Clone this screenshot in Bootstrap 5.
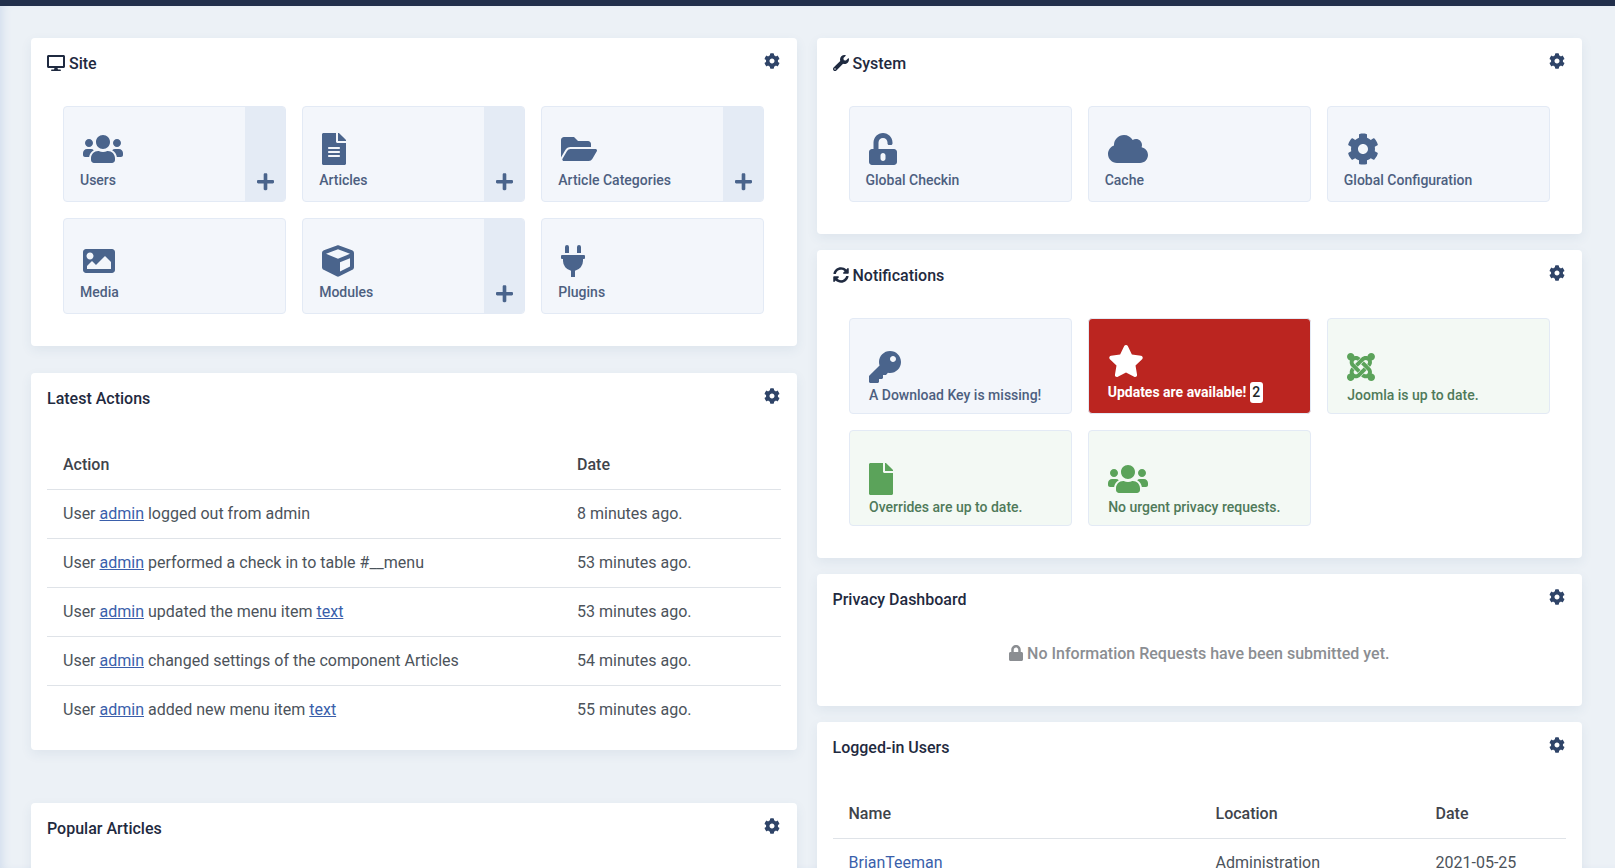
<!DOCTYPE html>
<html lang="en">
<head>
    <meta charset="UTF-8">
    <meta name="viewport" content="width=device-width, initial-scale=1.0">
    <title>Home Dashboard</title>
    <link rel="stylesheet" href="https://cdn.jsdelivr.net/npm/bootstrap@5.3.3/dist/css/bootstrap.min.css">
    <script src="https://cdn.jsdelivr.net/npm/bootstrap@5.3.3/dist/js/bootstrap.bundle.min.js"></script>
    <style>
        html, body {
            height: 100vh;
            overflow: hidden;
        }
        body {
            font-family: Roboto, "Liberation Sans", sans-serif;
            background-color: #ecf1f6;
            color: #495057;
        }
        .top-strip {
            height: 6px;
            background-color: #212f4b;
        }
        .dash-main {
            padding: 32px 33px 0 31px;
            box-shadow: inset 7px 0 8px -4px #d3deed;
            height: calc(100vh - 6px);
        }
        .dash-cols {
            --bs-gutter-x: 20px;
        }
        .dash-card {
            border: 0;
            border-radius: 4px;
            box-shadow: 0 4px 12px rgba(52, 84, 130, 0.08);
        }
        .gap-site { margin-bottom: 27px; }
        .gap-actions { margin-bottom: 53px; }
        .gap-right { margin-bottom: 16px; }
        .card-top {
            padding: 14px 17px 0 16px;
        }
        .card-heading {
            font-size: 16px;
            font-weight: 500;
            line-height: 24px;
            color: #1f2a40;
            margin: 0;
        }
        .head-icon {
            width: 18px;
            height: 16px;
            vertical-align: -2px;
            fill: #1f2a40;
        }
        .head-icon.sq { width: 16px; }
        .gear-icon {
            width: 16px;
            height: 16px;
            margin-top: 1px;
            fill: #2f4468;
        }
        .tile-wrap {
            padding: 30px 32px 32px;
        }
        .tile-row {
            --bs-gutter-x: 16px;
            --bs-gutter-y: 16px;
        }
        .dash-tile {
            height: 96px;
            background-color: #f3f6fb;
            border: 1px solid #e3eaf5;
            border-radius: 4px;
            overflow: hidden;
            color: #4d5f80;
        }
        .tile-main {
            padding: 0 0 10px 16px;
            flex: 1 1 auto;
            justify-content: flex-end;
        }
        .tile-glyph {
            height: 32px;
            width: auto;
            margin: 0 0 5px 3px;
            fill: #4a648c;
            align-self: flex-start;
        }
        .tile-label {
            font-size: 14px;
            font-weight: 500;
            line-height: 21px;
        }
        .tile-side {
            width: 40px;
            flex: 0 0 40px;
            background-color: #e4ebf5;
            padding-bottom: 10px;
        }
        .plus-glyph {
            width: 17px;
            height: 19.5px;
            fill: #4a648c;
        }
        .tile-note .tile-main {
            padding: 0 0 7.5px 19.5px;
        }
        .tile-note .tile-glyph {
            margin: 0 0 1.5px 0;
        }
        .tile-ok {
            background-color: #f3f9f4;
            color: #4f7a5a;
        }
        .tile-ok .tile-glyph {
            fill: #5ba35a;
        }
        .tile-alert {
            background-color: #bb2520;
            color: #fff;
        }
        .tile-alert .tile-main {
            padding: 0 0 10px 19px;
        }
        .tile-alert .tile-glyph {
            fill: #fff;
            margin: 0 0 5px 0;
        }
        .tile-alert .tile-label {
            font-weight: 700;
        }
        .count-pill {
            display: inline-block;
            background-color: #fff;
            color: #212529;
            border-radius: 3px;
            padding: 0 2.5px;
            font-weight: 500;
        }
        .table-wrap {
            padding: 30px 16px 16px;
        }
        .dash-table {
            --bs-table-bg: transparent;
            --bs-table-color: #4c535b;
            --bs-table-border-color: #dfe3e8;
            table-layout: fixed;
        }
        .dash-table th, .dash-table td {
            padding: 12px 16px;
            line-height: 24px;
        }
        .dash-table th {
            font-weight: 500;
            color: #3f444b;
        }
        .dash-table thead tr { border-bottom: 1px solid #dfe3e8; }
        .dash-table thead th { border-bottom: 0; }
        .dash-table tbody { border-top: 0 !important; }
        .dash-table tbody tr:last-child td { border-bottom: 0; }
        .dash-table a {
            color: #3a5fab;
        }
        .col-action { width: 514px; }
        .col-name { width: 367px; }
        .col-where { width: 220px; }
        .empty-note {
            padding: 30px 16px 40px;
            font-weight: 500;
            line-height: 24px;
            color: #8b8e92;
        }
        .empty-note svg {
            width: 14px;
            height: 16px;
            fill: #8b8e92;
            vertical-align: -2px;
        }
        .popular-card {
            min-height: 200px;
        }
    </style>
</head>
<body>
    <svg xmlns="http://www.w3.org/2000/svg" class="d-none">
        <symbol id="i-users" viewBox="0 0 640 512"><path d="M96 224c35.3 0 64-28.7 64-64s-28.7-64-64-64-64 28.7-64 64 28.7 64 64 64zm448 0c35.3 0 64-28.7 64-64s-28.7-64-64-64-64 28.7-64 64 28.7 64 64 64zm32 32h-64c-17.6 0-33.5 7.1-45.1 18.6 40.3 22.1 68.9 62 75.1 109.4h66c17.7 0 32-14.3 32-32v-32c0-35.3-28.7-64-64-64zm-256 0c61.9 0 112-50.1 112-112S381.9 32 320 32 208 82.1 208 144s50.1 112 112 112zm76.8 32h-8.3c-20.8 10-43.9 16-68.5 16s-47.6-6-68.5-16h-8.3C179.6 288 128 339.6 128 403.2V432c0 26.5 21.5 48 48 48h288c26.5 0 48-21.5 48-48v-28.8c0-63.6-51.6-115.2-115.2-115.2zm-223.7-13.4C161.5 263.1 145.6 256 128 256H64c-35.3 0-64 28.7-64 64v32c0 17.7 14.3 32 32 32h65.9c6.3-47.4 34.9-87.3 75.2-109.4z"/></symbol>
        <symbol id="i-file-alt" viewBox="0 0 384 512"><path d="M224 136V0H24C10.7 0 0 10.7 0 24v464c0 13.3 10.7 24 24 24h336c13.3 0 24-10.7 24-24V160H248c-13.2 0-24-10.8-24-24zm64 236c0 6.6-5.4 12-12 12H108c-6.6 0-12-5.4-12-12v-8c0-6.6 5.4-12 12-12h168c6.6 0 12 5.4 12 12v8zm0-64c0 6.6-5.4 12-12 12H108c-6.6 0-12-5.4-12-12v-8c0-6.6 5.4-12 12-12h168c6.6 0 12 5.4 12 12v8zm0-72v8c0 6.6-5.4 12-12 12H108c-6.6 0-12-5.4-12-12v-8c0-6.6 5.4-12 12-12h168c6.6 0 12 5.4 12 12zm96-114.1v6.1H256V0h6.1c6.4 0 12.5 2.5 17 7l97.9 98c4.5 4.5 7 10.6 7 16.9z"/></symbol>
        <symbol id="i-file" viewBox="0 0 384 512"><path d="M224 136V0H24C10.7 0 0 10.7 0 24v464c0 13.3 10.7 24 24 24h336c13.3 0 24-10.7 24-24V160H248c-13.2 0-24-10.8-24-24zm160-14.1v6.1H256V0h6.1c6.4 0 12.5 2.5 17 7l97.9 98c4.5 4.5 7 10.6 7 16.9z"/></symbol>
        <symbol id="i-folder" viewBox="0 0 576 512"><path d="M572.694 292.093L500.27 416.248A63.997 63.997 0 0 1 444.989 448H45.025c-18.523 0-30.064-20.093-20.731-36.093l72.424-124.155A64 64 0 0 1 152 256h399.964c18.523 0 30.064 20.093 20.73 36.093zM152 224h328v-48c0-26.51-21.49-48-48-48H272l-64-64H48C21.49 64 0 85.49 0 112v278.046l69.077-118.418C86.214 242.25 117.989 224 152 224z"/></symbol>
        <symbol id="i-image" viewBox="0 0 512 512"><path d="M464 448H48c-26.51 0-48-21.49-48-48V112c0-26.51 21.49-48 48-48h416c26.51 0 48 21.49 48 48v288c0 26.51-21.49 48-48 48zM112 120c-30.928 0-56 25.072-56 56s25.072 56 56 56 56-25.072 56-56-25.072-56-56-56zM64 384h384V272l-87.515-87.515c-4.686-4.686-12.284-4.686-16.971 0L208 320l-55.515-55.515c-4.686-4.686-12.284-4.686-16.971 0L64 336v48z"/></symbol>
        <symbol id="i-cube" viewBox="0 0 512 512"><path d="M239.1 6.3l-208 78c-18.7 7-31.1 25-31.1 45v225.1c0 18.2 10.3 34.8 26.5 42.9l208 104c13.5 6.8 29.4 6.8 42.9 0l208-104c16.3-8.1 26.5-24.8 26.5-42.9V129.3c0-20-12.4-37.9-31.1-44.9l-208-78C262 2.2 250 2.2 239.1 6.3zM256 68.4l192 72v1.1l-192 78-192-78v-1.1l192-72zm32 356V275.5l160-65v133.9l-160 80z"/></symbol>
        <symbol id="i-plug" viewBox="0 0 384 512"><path d="M320,32a32,32,0,0,0-64,0v96h64Zm48,128H16A16,16,0,0,0,0,176v32a16,16,0,0,0,16,16H32v32A160.07,160.07,0,0,0,160,412.8V512h64V412.8A160.07,160.07,0,0,0,352,256V224h16a16,16,0,0,0,16-16V176A16,16,0,0,0,368,160ZM128,32a32,32,0,0,0-64,0v96h64Z"/></symbol>
        <symbol id="i-plus" viewBox="0 0 448 512"><path d="M416 208H272V64c0-17.67-14.33-32-32-32h-32c-17.67 0-32 14.33-32 32v144H32c-17.67 0-32 14.33-32 32v32c0 17.67 14.33 32 32 32h144v144c0 17.67 14.33 32 32 32h32c17.67 0 32-14.33 32-32V304h144c17.67 0 32-14.33 32-32v-32c0-17.67-14.33-32-32-32z"/></symbol>
        <symbol id="i-cog" viewBox="0 0 512 512"><path d="M487.4 315.7l-42.6-24.6c4.3-23.2 4.3-47 0-70.2l42.6-24.6c4.9-2.8 7.1-8.6 5.5-14-11.1-35.6-30-67.8-54.7-94.6-3.8-4.1-10-5.1-14.8-2.3L380.8 110c-17.9-15.4-38.5-27.3-60.8-35.1V25.8c0-5.6-3.9-10.5-9.4-11.7-36.7-8.2-74.3-7.8-109.2 0-5.5 1.2-9.4 6.1-9.4 11.7V75c-22.2 7.9-42.8 19.8-60.8 35.1L88.7 85.5c-4.9-2.8-11-1.9-14.8 2.3-24.7 26.7-43.6 58.9-54.7 94.6-1.7 5.4.6 11.2 5.5 14L67.3 221c-4.3 23.2-4.3 47 0 70.2l-42.6 24.6c-4.9 2.8-7.1 8.6-5.5 14 11.1 35.6 30 67.8 54.7 94.6 3.8 4.1 10 5.1 14.8 2.3l42.6-24.6c17.9 15.4 38.5 27.3 60.8 35.1v49.2c0 5.6 3.9 10.5 9.4 11.7 36.7 8.2 74.3 7.8 109.2 0 5.5-1.2 9.4-6.1 9.4-11.7v-49.2c22.2-7.9 42.8-19.8 60.8-35.1l42.6 24.6c4.9 2.8 11 1.9 14.8-2.3 24.7-26.7 43.6-58.9 54.7-94.6 1.5-5.5-.7-11.3-5.6-14.1zM256 336c-44.1 0-80-35.9-80-80s35.9-80 80-80 80 35.9 80 80-35.9 80-80 80z"/></symbol>
        <symbol id="i-desktop" viewBox="0 0 576 512"><path d="M528 0H48C21.5 0 0 21.5 0 48v320c0 26.5 21.5 48 48 48h192l-16 48h-72c-13.3 0-24 10.7-24 24s10.7 24 24 24h272c13.3 0 24-10.7 24-24s-10.7-24-24-24h-72l-16-48h192c26.5 0 48-21.5 48-48V48c0-26.5-21.5-48-48-48zm-16 352H64V64h448v288z"/></symbol>
        <symbol id="i-wrench" viewBox="0 0 512 512"><path d="M507.73 109.1c-2.24-9.03-13.54-12.09-20.12-5.51l-74.36 74.36-67.88-11.31-11.31-67.88 74.36-74.36c6.62-6.62 3.43-17.9-5.66-20.16-47.38-11.74-99.55.91-136.58 37.93-39.64 39.64-50.55 97.1-34.05 147.2L18.74 402.76c-24.99 24.99-24.99 65.51 0 90.5 24.99 24.99 65.51 24.99 90.5 0l213.21-213.21c50.12 16.71 107.47 5.68 147.37-34.22 37.07-37.07 49.7-89.32 37.91-136.73zM64 472c-13.25 0-24-10.75-24-24 0-13.26 10.75-24 24-24s24 10.74 24 24c0 13.25-10.75 24-24 24z"/></symbol>
        <symbol id="i-sync" viewBox="0 0 512 512"><path d="M370.72 133.28C339.458 104.008 298.888 87.962 255.848 88c-77.458.068-144.328 53.178-162.791 126.85-1.344 5.363-6.122 9.15-11.651 9.15H24.103c-7.498 0-13.194-6.807-11.807-14.176C33.933 94.924 134.813 8 256 8c66.448 0 126.791 26.136 171.315 68.685L463.03 40.97C478.149 25.851 504 36.559 504 57.941V192c0 13.255-10.745 24-24 24H345.941c-21.382 0-32.09-25.851-16.971-40.971l41.75-41.749zM32 296h134.059c21.382 0 32.09 25.851 16.971 40.971l-41.75 41.75c31.262 29.273 71.835 45.319 114.876 45.28 77.418-.07 144.315-53.144 162.787-126.849 1.344-5.363 6.122-9.15 11.651-9.15h57.304c7.498 0 13.194 6.807 11.807 14.176C478.067 417.076 377.187 504 256 504c-66.448 0-126.791-26.136-171.315-68.685L48.97 471.03C33.851 486.149 8 475.441 8 454.059V320c0-13.255 10.745-24 24-24z"/></symbol>
        <symbol id="i-lock" viewBox="0 0 448 512"><path d="M400 224h-24v-72C376 68.2 307.8 0 224 0S72 68.2 72 152v72H48c-26.5 0-48 21.5-48 48v192c0 26.5 21.5 48 48 48h352c26.5 0 48-21.5 48-48V272c0-26.5-21.5-48-48-48zm-104 0H152v-72c0-39.7 32.3-72 72-72s72 32.3 72 72v72z"/></symbol>
        <symbol id="i-unlock" viewBox="0 0 448 512"><path d="M400 256H152V152.9c0-39.6 31.7-72.5 71.3-72.9 40-.4 72.7 32.1 72.7 72v16c0 13.3 10.7 24 24 24h32c13.3 0 24-10.7 24-24v-16C376 68 307.5-.3 223.5 0 139.5.3 72 69.5 72 153.5V256H48c-26.5 0-48 21.5-48 48v160c0 26.5 21.5 48 48 48h352c26.5 0 48-21.5 48-48V304c0-26.5-21.5-48-48-48zM264 408c0 22.1-17.9 40-40 40s-40-17.9-40-40v-48c0-22.1 17.9-40 40-40s40 17.9 40 40v48z"/></symbol>
        <symbol id="i-cloud" viewBox="0 0 640 512"><path d="M537.6 226.6c4.1-10.7 6.4-22.4 6.4-34.6 0-53-43-96-96-96-19.7 0-38.1 6-53.3 16.2C367 64.2 315.3 32 256 32c-88.4 0-160 71.6-160 160 0 2.7.1 5.4.2 8.1C40.2 219.8 0 273.2 0 336c0 79.5 64.5 144 144 144h368c70.7 0 128-57.3 128-128 0-61.9-44-113.6-102.4-125.4z"/></symbol>
        <symbol id="i-key" viewBox="0 0 512 512"><path d="M512 176.001C512 273.203 433.202 352 336 352c-11.22 0-22.19-1.062-32.827-3.069l-24.012 27.014A23.999 23.999 0 0 1 261.223 384H224v40c0 13.255-10.745 24-24 24h-40v40c0 13.255-10.745 24-24 24H24c-13.255 0-24-10.745-24-24v-78.059c0-6.365 2.529-12.47 7.029-16.971l161.802-161.802C163.108 213.814 160 195.271 160 176 160 78.798 238.797.001 335.999 0 433.488-.001 512 78.511 512 176.001zM336 128c0 26.51 21.49 48 48 48s48-21.49 48-48-21.49-48-48-48-48 21.49-48 48z"/></symbol>
        <symbol id="i-star" viewBox="0 0 576 512"><path d="M259.3 17.8L194 150.2 47.9 171.5c-26.2 3.8-36.7 36.1-17.7 54.6l105.7 103-25 145.5c-4.5 26.3 23.2 46 46.4 33.7L288 439.6l130.7 68.7c23.2 12.2 50.9-7.4 46.4-33.7l-25-145.5 105.7-103c19-18.5 8.5-50.8-17.7-54.6L382 150.2 316.7 17.8c-11.7-23.6-45.6-23.9-57.4 0z"/></symbol>
        <symbol id="i-joomla" viewBox="0 0 448 512"><path d="M.6 92.1C.6 58.8 27.4 32 60.4 32c30 0 54.5 21.9 59.2 50.2 32.6-7.6 67.1.6 96.5 30l-44.3 44.3c-20.5-20.5-42.6-16.3-55.4-3.5-14.3 14.3-14.3 37.9 0 52.2l99.5 99.5-44 44.3c-87.7-87.2-49.7-49.7-99.8-99.7-26.8-26.5-35-64.8-24.8-98.9C20.4 144.6.6 120.7.6 92.1zm129.5 116.4l44.3 44.3c10-10 89.7-89.7 99.7-99.8 14.3-14.3 37.6-14.3 51.9 0 12.8 12.8 17 35-3.5 55.4l44 44.3c31.2-31.2 38.5-67.6 28.9-101.2 29.2-4.1 51.9-29.2 51.9-59.5 0-33.2-26.8-60.1-59.8-60.1-30.3 0-55.4 22.5-59.5 51.6-33.8-9.9-71.7-1.5-98.3 25.1-18.7 18.6-71.6 71.7-99.6 99.9zm266.3 152.2c8.2-32.7-.9-68.5-26.3-93.9-11.8-12.2 5 4.7-99.5-99.7l-44.3 44.3 99.7 99.7c14.3 14.3 14.3 37.6 0 51.9-12.8 12.8-35 17-55.4-3.5l-44 44.3c27.6 30.2 68 38.8 102.7 28 5.5 27.4 29.7 48.1 58.9 48.1 33 0 59.8-26.8 59.8-60.1 0-30.2-22.5-55-51.6-58.9zm-84.3-53.1l-44-44.3c-87 86.4-50.4 50.4-99.7 99.8-14.3 14.3-37.6 14.3-51.9 0-13.1-13.4-16.9-35.3 3.2-55.4l-44-44.3c-30.2 30.2-38 65.2-29.5 98.3-26.7 6-46.8 29.9-46.8 58.4 0 33.2 26.8 60.1 59.8 60.1 28.6 0 52.5-19.8 58.6-46.7 32.7 8.2 68.5-.6 94.2-26 32.1-32 12.2-12.4 99.5-99.7z"/></symbol>
    </svg>

    <div class="top-strip"></div>

    <main class="dash-main">
        <div class="row dash-cols">

            <div class="col-6">
                <section class="card dash-card gap-site">
                    <div class="card-top d-flex justify-content-between align-items-start">
                        <h2 class="card-heading"><svg class="head-icon"><use href="#i-desktop"/></svg> Site</h2>
                        <svg class="gear-icon"><use href="#i-cog"/></svg>
                    </div>
                    <div class="tile-wrap">
                        <div class="row row-cols-3 tile-row">
                            <div class="col"><div class="dash-tile d-flex">
                                <div class="tile-main d-flex flex-column"><svg class="tile-glyph" viewBox="0 0 640 512"><use href="#i-users"/></svg><span class="tile-label">Users</span></div>
                                <div class="tile-side d-flex align-items-end justify-content-center"><svg class="plus-glyph"><use href="#i-plus"/></svg></div>
                            </div></div>
                            <div class="col"><div class="dash-tile d-flex">
                                <div class="tile-main d-flex flex-column"><svg class="tile-glyph" viewBox="0 0 384 512"><use href="#i-file-alt"/></svg><span class="tile-label">Articles</span></div>
                                <div class="tile-side d-flex align-items-end justify-content-center"><svg class="plus-glyph"><use href="#i-plus"/></svg></div>
                            </div></div>
                            <div class="col"><div class="dash-tile d-flex">
                                <div class="tile-main d-flex flex-column"><svg class="tile-glyph" viewBox="0 0 576 512"><use href="#i-folder"/></svg><span class="tile-label">Article Categories</span></div>
                                <div class="tile-side d-flex align-items-end justify-content-center"><svg class="plus-glyph"><use href="#i-plus"/></svg></div>
                            </div></div>
                            <div class="col"><div class="dash-tile d-flex">
                                <div class="tile-main d-flex flex-column"><svg class="tile-glyph" viewBox="0 0 512 512"><use href="#i-image"/></svg><span class="tile-label">Media</span></div>
                            </div></div>
                            <div class="col"><div class="dash-tile d-flex">
                                <div class="tile-main d-flex flex-column"><svg class="tile-glyph" viewBox="0 0 512 512"><use href="#i-cube"/></svg><span class="tile-label">Modules</span></div>
                                <div class="tile-side d-flex align-items-end justify-content-center"><svg class="plus-glyph"><use href="#i-plus"/></svg></div>
                            </div></div>
                            <div class="col"><div class="dash-tile d-flex">
                                <div class="tile-main d-flex flex-column"><svg class="tile-glyph" viewBox="0 0 384 512"><use href="#i-plug"/></svg><span class="tile-label">Plugins</span></div>
                            </div></div>
                        </div>
                    </div>
                </section>

                <section class="card dash-card gap-actions">
                    <div class="card-top d-flex justify-content-between align-items-start">
                        <h2 class="card-heading">Latest Actions</h2>
                        <svg class="gear-icon"><use href="#i-cog"/></svg>
                    </div>
                    <div class="table-wrap">
                        <table class="table dash-table mb-0">
                            <thead>
                                <tr><th class="col-action">Action</th><th>Date</th></tr>
                            </thead>
                            <tbody>
                                <tr><td>User <a href="#">admin</a> logged out from admin</td><td>8 minutes ago.</td></tr>
                                <tr><td>User <a href="#">admin</a> performed a check in to table #__menu</td><td>53 minutes ago.</td></tr>
                                <tr><td>User <a href="#">admin</a> updated the menu item <a href="#">text</a></td><td>53 minutes ago.</td></tr>
                                <tr><td>User <a href="#">admin</a> changed settings of the component Articles</td><td>54 minutes ago.</td></tr>
                                <tr><td>User <a href="#">admin</a> added new menu item <a href="#">text</a></td><td>55 minutes ago.</td></tr>
                            </tbody>
                        </table>
                    </div>
                </section>

                <section class="card dash-card popular-card">
                    <div class="card-top d-flex justify-content-between align-items-start">
                        <h2 class="card-heading">Popular Articles</h2>
                        <svg class="gear-icon"><use href="#i-cog"/></svg>
                    </div>
                </section>
            </div>

            <div class="col-6">
                <section class="card dash-card gap-right">
                    <div class="card-top d-flex justify-content-between align-items-start">
                        <h2 class="card-heading"><svg class="head-icon sq"><use href="#i-wrench"/></svg> System</h2>
                        <svg class="gear-icon"><use href="#i-cog"/></svg>
                    </div>
                    <div class="tile-wrap">
                        <div class="row row-cols-3 tile-row">
                            <div class="col"><div class="dash-tile d-flex">
                                <div class="tile-main d-flex flex-column"><svg class="tile-glyph" viewBox="0 0 448 512"><use href="#i-unlock"/></svg><span class="tile-label">Global Checkin</span></div>
                            </div></div>
                            <div class="col"><div class="dash-tile d-flex">
                                <div class="tile-main d-flex flex-column"><svg class="tile-glyph" viewBox="0 0 640 512"><use href="#i-cloud"/></svg><span class="tile-label">Cache</span></div>
                            </div></div>
                            <div class="col"><div class="dash-tile d-flex">
                                <div class="tile-main d-flex flex-column"><svg class="tile-glyph" viewBox="0 0 512 512"><use href="#i-cog"/></svg><span class="tile-label">Global Configuration</span></div>
                            </div></div>
                        </div>
                    </div>
                </section>

                <section class="card dash-card gap-right">
                    <div class="card-top d-flex justify-content-between align-items-start">
                        <h2 class="card-heading"><svg class="head-icon sq"><use href="#i-sync"/></svg> Notifications</h2>
                        <svg class="gear-icon"><use href="#i-cog"/></svg>
                    </div>
                    <div class="tile-wrap">
                        <div class="row row-cols-3 tile-row">
                            <div class="col"><div class="dash-tile tile-note d-flex">
                                <div class="tile-main d-flex flex-column"><svg class="tile-glyph" viewBox="0 0 512 512"><use href="#i-key"/></svg><span class="tile-label">A Download Key is missing!</span></div>
                            </div></div>
                            <div class="col"><div class="dash-tile tile-alert d-flex">
                                <div class="tile-main d-flex flex-column"><svg class="tile-glyph" viewBox="0 0 576 512"><use href="#i-star"/></svg><span class="tile-label">Updates are available! <span class="count-pill">2</span></span></div>
                            </div></div>
                            <div class="col"><div class="dash-tile tile-note tile-ok d-flex">
                                <div class="tile-main d-flex flex-column"><svg class="tile-glyph" viewBox="0 0 448 512"><use href="#i-joomla"/></svg><span class="tile-label">Joomla is up to date.</span></div>
                            </div></div>
                            <div class="col"><div class="dash-tile tile-note tile-ok d-flex">
                                <div class="tile-main d-flex flex-column"><svg class="tile-glyph" viewBox="0 0 384 512"><use href="#i-file"/></svg><span class="tile-label">Overrides are up to date.</span></div>
                            </div></div>
                            <div class="col"><div class="dash-tile tile-note tile-ok d-flex">
                                <div class="tile-main d-flex flex-column"><svg class="tile-glyph" viewBox="0 0 640 512"><use href="#i-users"/></svg><span class="tile-label">No urgent privacy requests.</span></div>
                            </div></div>
                        </div>
                    </div>
                </section>

                <section class="card dash-card gap-right">
                    <div class="card-top d-flex justify-content-between align-items-start">
                        <h2 class="card-heading">Privacy Dashboard</h2>
                        <svg class="gear-icon"><use href="#i-cog"/></svg>
                    </div>
                    <div class="empty-note text-center"><svg><use href="#i-lock"/></svg> No Information Requests have been submitted yet.</div>
                </section>

                <section class="card dash-card">
                    <div class="card-top d-flex justify-content-between align-items-start">
                        <h2 class="card-heading">Logged-in Users</h2>
                        <svg class="gear-icon"><use href="#i-cog"/></svg>
                    </div>
                    <div class="table-wrap">
                        <table class="table dash-table mb-0">
                            <thead>
                                <tr><th class="col-name">Name</th><th class="col-where">Location</th><th>Date</th></tr>
                            </thead>
                            <tbody>
                                <tr><td><a href="#" class="text-decoration-none">BrianTeeman</a></td><td>Administration</td><td>2021-05-25</td></tr>
                            </tbody>
                        </table>
                    </div>
                </section>
            </div>

        </div>
    </main>
</body>
</html>
